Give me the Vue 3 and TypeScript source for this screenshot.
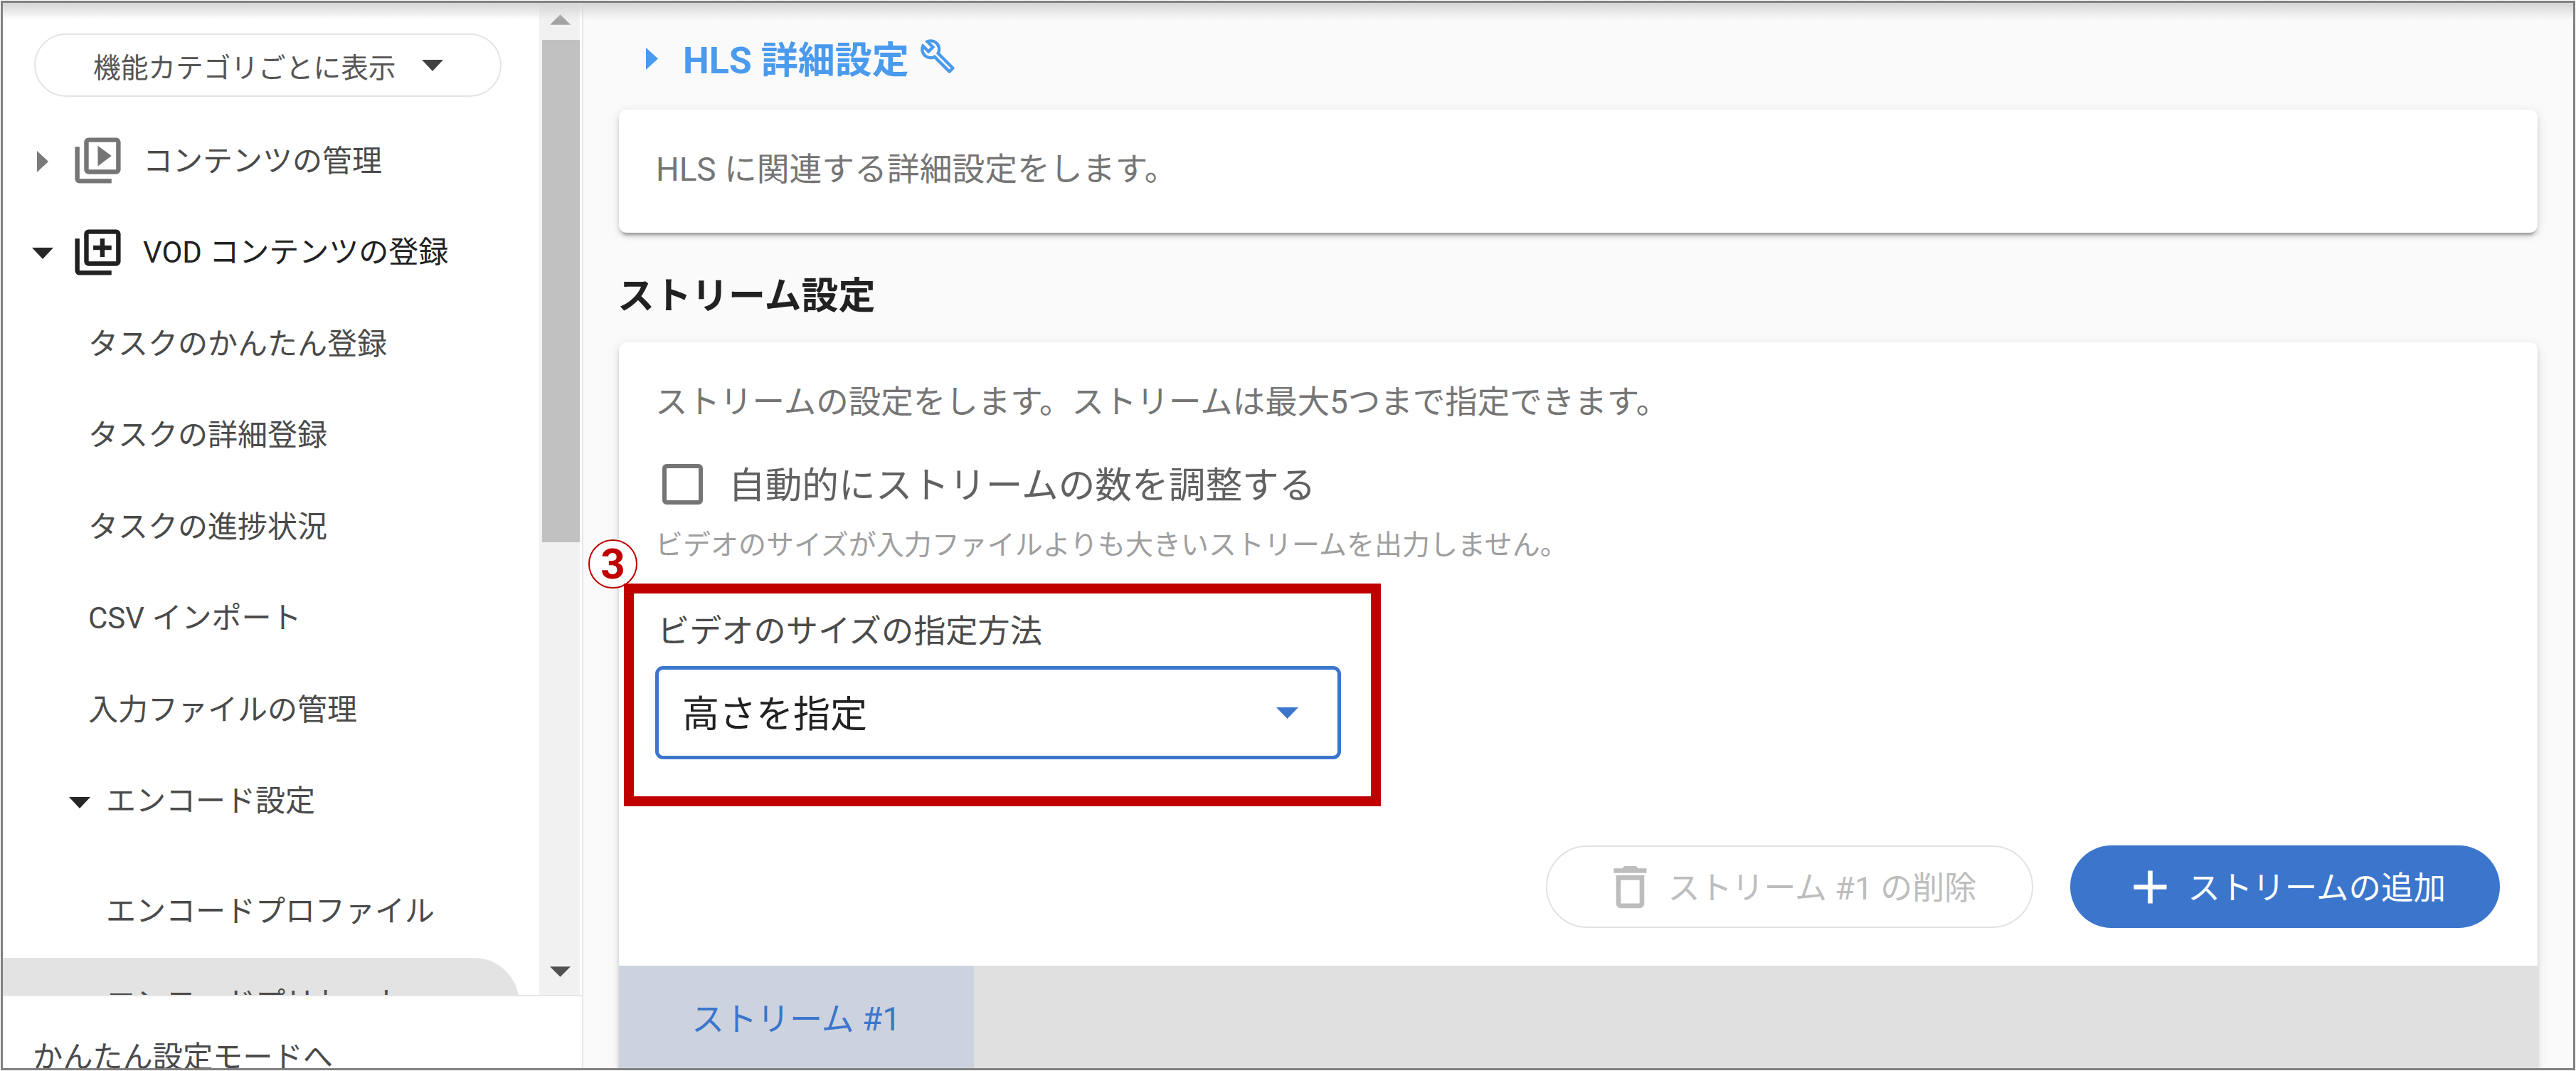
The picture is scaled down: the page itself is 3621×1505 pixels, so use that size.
<script setup lang="ts">
interface NavRow { label: string; cls: string }
const taskRows: NavRow[] = [
  { label: 'タスクのかんたん登録', cls: 'sub' },
  { label: 'タスクの詳細登録', cls: 'sub' },
  { label: 'タスクの進捗状況', cls: 'sub' },
  { label: 'CSV インポート', cls: 'sub' },
  { label: '入力ファイルの管理', cls: 'sub' },
]
const libBase = 'M4 6H2v14c0 1.1.9 2 2 2h14v-2H4V6zm16-4H8c-1.1 0-2 .9-2 2v12c0 1.1.9 2 2 2h12c1.1 0 2-.9 2-2V4c0-1.1-.9-2-2-2zm0 14H8V4h12v12z'
</script>

<template>
  <div class="frame">
    <div class="inner">
      <aside class="sidebar">
        <div class="scroll-area">
          <nav class="nav">
            <button class="pill">
              <span>機能カテゴリごとに表示</span>
              <svg class="pill-caret" viewBox="0 0 30 16"><polygon points="0,0 30,0 15,16" /></svg>
            </button>
            <div class="row top muted">
              <span class="caret-cell"><svg class="caret-r" viewBox="0 0 16 30"><polygon points="0,0 16,15 0,30" /></svg></span>
              <svg class="lib" viewBox="0 0 24 24"><path :d="libBase + 'M12 5.5v9l6-4.5z'" /></svg>
              <span>コンテンツの管理</span>
            </div>
            <div class="row top strong">
              <span class="caret-cell"><svg class="caret-d" viewBox="0 0 30 16"><polygon points="0,0 30,0 15,16" /></svg></span>
              <svg class="lib" viewBox="0 0 24 24"><path :d="libBase + 'm-7-2h2v-3h3V9h-3V6h-2v3h-3v2h3z'" /></svg>
              <span>VOD コンテンツの登録</span>
            </div>
            <div v-for="r in taskRows" :key="r.label" class="row" :class="r.cls">{{ r.label }}</div>
            <div class="row group">
              <span class="caret-cell"><svg class="caret-d" viewBox="0 0 30 16"><polygon points="0,0 30,0 15,16" /></svg></span>
              <span>エンコード設定</span>
            </div>
            <div class="row leaf profile">エンコードプロファイル</div>
            <div class="row leaf active">エンコードプリセット</div>
          </nav>
          <div class="scrollbar">
            <div class="sb-btn"><svg viewBox="0 0 30 15"><polygon points="15,0 30,15 0,15" fill="#a3a3a3" /></svg></div>
            <div class="sb-thumb"></div>
            <div class="sb-rest"></div>
            <div class="sb-btn down"><svg viewBox="0 0 30 15"><polygon points="0,0 30,0 15,15" fill="#505050" /></svg></div>
          </div>
        </div>
        <div class="side-foot">かんたん設定モードへ</div>
      </aside>

      <main class="main">
        <div class="heading">
          <svg class="head-caret" viewBox="0 0 17 31"><polygon points="0,0 17,15.5 0,31" /></svg>
          <span class="head-text">HLS 詳細設定</span>
          <svg class="wrench" viewBox="0 0 24 24"><path d="M22.61 18.99l-9.08-9.08c.93-2.34.45-5.1-1.44-7C9.79.61 6.21.4 3.66 2.26L7.5 6.11 6.08 7.52 2.25 3.69C.39 6.23.6 9.82 2.9 12.11c1.86 1.86 4.57 2.35 6.89 1.48l9.11 9.11c.39.39 1.02.39 1.41 0l2.3-2.3c.4-.38.4-1.01 0-1.41zm-3 1.6l-9.46-9.46c-.61.45-1.29.72-2 .82-1.36.2-2.79-.21-3.83-1.25C3.37 9.76 2.93 8.5 3 7.26l3.09 3.09 4.24-4.24-3.09-3.09c1.24-.07 2.49.37 3.44 1.31 1.08 1.08 1.49 2.57 1.24 3.96-.12.71-.42 1.37-.88 1.96l9.45 9.45-.88.88z" /></svg>
        </div>

        <section class="card intro">HLS に関連する詳細設定をします。</section>

        <h2 class="section-title">ストリーム設定</h2>

        <section class="card streams">
          <div class="body">
            <p class="lead">ストリームの設定をします。ストリームは最大5つまで指定できます。</p>
            <label class="check">
              <span class="box"></span>
              <span class="check-text">自動的にストリームの数を調整する</span>
            </label>
            <p class="help">ビデオのサイズが入力ファイルよりも大きいストリームを出力しません。</p>
            <div class="field">
              <span class="badge">3</span>
              <span class="highlight"></span>
              <div class="field-label">ビデオのサイズの指定方法</div>
              <div class="select">
                <span class="select-text">高さを指定</span>
                <svg viewBox="0 0 31 16"><polygon points="0,0 31,0 15.5,16" /></svg>
              </div>
            </div>
            <div class="actions">
              <button class="btn ghost">
                <svg viewBox="0 0 24 24"><path d="M6 19c0 1.1.9 2 2 2h8c1.1 0 2-.9 2-2V7H6v12zM8 9h8v10H8V9zm7.5-5l-1-1h-5l-1 1H5v2h14V4z" /></svg>
                <span class="btn-text">ストリーム #1 の削除</span>
              </button>
              <button class="btn primary">
                <svg viewBox="0 0 24 24"><path d="M19 13h-6v6h-2v-6H5v-2h6V5h2v6h6v2z" /></svg>
                <span class="btn-text">ストリームの追加</span>
              </button>
            </div>
          </div>
          <div class="tabs">
            <div class="tab">ストリーム #1</div>
          </div>
        </section>
      </main>
      <div class="top-shade"></div>
    </div>
  </div>
</template>

<style>
html, body { margin: 0; background: #fff; }
</style>

<style scoped>
* { box-sizing: border-box; }
.frame {
  width: 3621px;
  height: 1505px;
  padding: 1px;
  background: #fff;
  font-family: Roboto, "Noto Sans CJK JP", sans-serif;
  overflow: hidden;
}
.inner {
  position: relative;
  width: 100%;
  height: 100%;
  border: 3px solid #808080;
  display: grid;
  grid-template-columns: 816px 1fr;
  overflow: hidden;
}
.top-shade {
  position: absolute;
  left: 0;
  right: 0;
  top: 0;
  height: 24px;
  background: linear-gradient(#d4d4d4, rgba(255, 255, 255, 0));
  pointer-events: none;
}
.sidebar {
  background: #fff;
  border-right: 2px solid #e6e6e6;
  display: flex;
  flex-direction: column;
  height: 1497px;
}
.scroll-area {
  height: 1394px;
  display: flex;
  overflow: hidden;
}
.nav {
  width: 754px;
  padding-top: 43px;
  font-size: 42px;
  color: #4a4a4a;
}
.pill {
  display: flex;
  align-items: center;
  width: 657px;
  height: 89px;
  margin: 0 0 24px 44px;
  padding: 0 0 0 81px;
  background: #fff;
  border: 2px solid #e4e4e4;
  border-radius: 45px;
  font: inherit;
  font-size: 38.7px;
  color: #555;
}
.pill-caret {
  width: 30px;
  height: 16px;
  margin-left: 36px;
  fill: #424242;
}
.row {
  display: flex;
  align-items: center;
  height: 128.5px;
  padding-bottom: 4px;
}
.top { padding-left: 36px; }
.caret-cell {
  width: 40px;
  display: flex;
  justify-content: center;
  flex: none;
  margin-top: 10px;
}
.caret-r { width: 16px; height: 30px; fill: #7a7a7a; }
.caret-d { width: 30px; height: 16px; fill: #262626; }
.lib {
  width: 77px;
  height: 77px;
  margin: 7px 25px 0 19px;
  flex: none;
}
.muted .lib { fill: #757575; }
.strong .lib { fill: #212121; }
.strong { color: #212121; }
.sub { padding-left: 120px; }
.group { padding-left: 88px; }
.group .caret-cell { margin-right: 17px; margin-top: 12px; }
.leaf { padding-left: 145px; }
.profile { margin-top: 26px; }
.active {
  margin-top: 3px;
  width: 726px;
  padding-bottom: 8px;
  background: #e3e3e3;
  border-radius: 0 64px 64px 0;
}
.scrollbar {
  width: 60px;
  display: flex;
  flex-direction: column;
  background: linear-gradient(90deg, #f1f1f1 57px, #fff 57px);
  flex: none;
}
.sb-btn {
  height: 52px;
  display: flex;
  justify-content: center;
  align-items: flex-start;
  padding: 16px 2px 0 0;
}
.sb-btn svg { width: 29px; height: 15px; }
.sb-btn.down { height: 40px; padding-top: 0; align-items: flex-start; }
.sb-thumb {
  height: 706px;
  width: 53px;
  margin-left: 4px;
  background: #c1c1c1;
}
.sb-rest { flex: 1; }
.side-foot {
  height: 103px;
  border-top: 2px solid #e6e6e6;
  padding: 56px 0 0 42px;
  font-size: 42.2px;
  line-height: 60px;
  color: #4a4a4a;
  overflow: hidden;
}
.main {
  background: #fafafa;
  padding: 44px 50px 0;
  height: 1497px;
  overflow: hidden;
}
.heading {
  display: flex;
  align-items: center;
  height: 68px;
  margin-left: 38px;
  font-size: 52px;
  font-weight: 700;
  color: #4a9aed;
}
.head-text { margin-top: -4px; }
.head-caret {
  width: 17px;
  height: 31px;
  margin-right: 35px;
  fill: #4a9aed;
}
.wrench {
  width: 52px;
  height: 52px;
  margin-left: 14px;
  margin-top: -6px;
  fill: #4a9aed;
}
.card {
  background: #fff;
  border-radius: 11px;
  box-shadow: 0 8px 3px -5px rgba(0, 0, 0, 0.2), 0 5px 5px 0 rgba(0, 0, 0, 0.14), 0 3px 14px 0 rgba(0, 0, 0, 0.12);
}
.intro {
  height: 173px;
  margin-top: 38px;
  padding: 54px 52px 0;
  font-size: 45.8px;
  line-height: 62px;
  color: #757575;
}
.section-title {
  height: 66px;
  margin: 57px 0 -2px -2px;
  font-size: 52px;
  line-height: 66px;
  font-weight: 700;
  color: #212121;
}
.streams {
  margin-top: 33px;
  height: 1100px;
  overflow: visible;
}
.body {
  height: 876px;
  padding: 54px 53px 0;
}
.lead {
  margin: 0 0 0 -2px;
  height: 62px;
  font-size: 45.5px;
  line-height: 62px;
  color: #757575;
}
.check {
  display: flex;
  align-items: center;
  height: 64px;
  margin-top: 51px;
  padding-left: 8px;
  font-size: 51.7px;
  color: #616161;
}
.check-text { margin-top: -6px; }
.box {
  width: 57px;
  height: 57px;
  margin-right: 36px;
  border: 6px solid #757575;
  border-radius: 6px;
  flex: none;
}
.help {
  margin: 29px 0 0 -2px;
  height: 50px;
  font-size: 39px;
  line-height: 50px;
  color: #9e9e9e;
}
.field {
  position: relative;
  margin-top: 69px;
}
.field-label {
  height: 56px;
  margin-left: 1px;
  font-size: 45.2px;
  line-height: 56px;
  color: #4a4a4a;
}
.select {
  display: flex;
  align-items: center;
  justify-content: space-between;
  width: 964px;
  height: 131px;
  margin: 20px 0 0 -2px;
  padding: 0 55px 0 33px;
  border: 5px solid #3b76cc;
  border-radius: 11px;
  font-size: 52px;
  color: #212121;
}
.select-text { margin-top: -4px; }
.select svg { width: 31px; height: 16px; fill: #3b76cc; }
.highlight {
  position: absolute;
  left: -46px;
  top: -40px;
  width: 1064px;
  height: 313px;
  border: 14px solid #c00000;
  pointer-events: none;
}
.badge {
  position: absolute;
  left: -96px;
  top: -102px;
  width: 69px;
  height: 69px;
  border: 2.5px solid #c00000;
  border-radius: 50%;
  display: flex;
  align-items: center;
  justify-content: center;
  background: #fff;
  color: #c00000;
  font-size: 60px;
  font-weight: 700;
  line-height: 1;
}
.actions {
  display: flex;
  justify-content: flex-end;
  gap: 52px;
  margin-top: 121px;
}
.btn {
  display: flex;
  align-items: center;
  height: 116px;
  border-radius: 58px;
  font: inherit;
}
.btn svg {
  width: 79px;
  height: 79px;
  flex: none;
}
.btn-text { margin-top: -4px; }
.ghost {
  padding: 0 78px 0 77px;
  background: #fff;
  border: 2px solid #e2e2e2;
  color: #bdbdbd;
  font-size: 45px;
}
.ghost svg { fill: #bdbdbd; margin-right: 13px; }
.primary {
  padding: 0 76px 0 73px;
  background: #3b76cc;
  border: 0;
  color: #fff;
  font-size: 45.5px;
}
.primary svg { fill: #fff; margin-right: 13px; }
.tabs {
  height: 224px;
  background: #e0e0e0;
}
.tab {
  width: 499px;
  height: 100%;
  padding: 44px 0 0 102px;
  background: #ccd3df;
  color: #3b76cc;
  font-size: 46px;
  line-height: 62px;
}
</style>
